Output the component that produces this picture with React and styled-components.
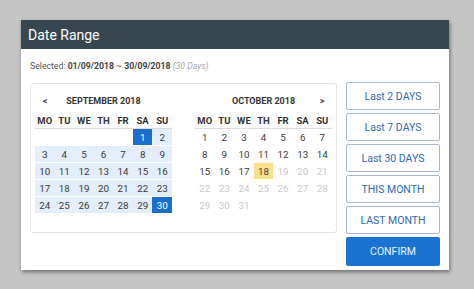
import React from "react";
import styled, { createGlobalStyle } from "styled-components";

const Global = createGlobalStyle`
  html, body { margin: 0; padding: 0; }
  body {
    background: #c5c5c5;
    font-family: Roboto, "Liberation Sans", sans-serif;
    width: 474px;
    height: 289px;
    overflow: hidden;
  }
  * { box-sizing: border-box; }
`;

const Panel = styled.div`
  margin: 20px 0 0 21px;
  width: 428px;
  height: 250px;
  background: #fff;
  box-shadow: 1px 2px 4px rgba(0, 0, 0, 0.45);
`;

const Header = styled.div`
  height: 29px;
  background: #37474f;
  color: #fff;
  font-size: 14px;
  padding-left: 7px;
  display: flex;
  align-items: center;
`;

const Body = styled.div`
  padding: 11px 9px 4px 9px;
`;

const Selected = styled.div`
  font-size: 8.7px;
  line-height: 12px;
  height: 12px;
  color: #555;
  margin-bottom: 10px;
  b { color: #444; font-weight: 700; }
  i { color: #aaa; }
`;

const Row = styled.div`
  display: flex;
  gap: 9px;
  align-items: flex-start;
`;

const CalendarBox = styled.div`
  margin-top: 1px;
  width: 307px;
  height: 150px;
  border: 1px solid #e4e4e4;
  border-radius: 3px;
  padding: 5px 4px 0 4px;
  display: flex;
  gap: 23px;
`;

const Month = styled.div`
  width: 137px;
`;

const MonthHeader = styled.div`
  height: 24px;
  display: grid;
  grid-template-columns: 20px 1fr 20px;
  align-items: center;
  text-align: center;
  font-size: 9px;
  font-weight: 700;
  color: #333;
`;

const Arrow = styled.span`
  font-size: 9px;
  font-weight: 700;
  color: #333;
`;

const Weekdays = styled.div`
  display: grid;
  grid-template-columns: repeat(7, 1fr);
  height: 16px;
  align-items: center;
  text-align: center;
  font-size: 9.5px;
  font-weight: 700;
  color: #333;
  border-bottom: 1px solid #dcdcdc;
`;

const Days = styled.div`
  display: grid;
  grid-template-columns: repeat(7, 1fr);
  grid-auto-rows: 16px;
  row-gap: 1px;
`;

const bg = {
  range: "#e3eefa",
  selected: "#1a6fcd",
  today: "#fbe08a",
  normal: "transparent",
  disabled: "transparent",
  empty: "transparent",
};
const fg = {
  range: "#3a3a3a",
  selected: "#fff",
  today: "#3a3a3a",
  normal: "#3a3a3a",
  disabled: "#c9c9c9",
  empty: "#3a3a3a",
};

const Day = styled.div`
  display: flex;
  align-items: center;
  justify-content: center;
  font-size: 9.8px;
  background: ${(p) => bg[p.$kind]};
  color: ${(p) => fg[p.$kind]};
`;

const Buttons = styled.div`
  width: 94px;
  display: flex;
  flex-direction: column;
  gap: 3px;
`;

const OptionButton = styled.button`
  height: 28px;
  border: 1px solid #a7b9cb;
  border-radius: 2px;
  background: #fff;
  color: #3069ac;
  font-family: Roboto, "Liberation Sans", sans-serif;
  font-size: 10.5px;
  padding: 0;
`;

const ConfirmButton = styled(OptionButton)`
  height: 29px;
  border: none;
  background: #1a73d0;
  color: #eaf3fd;
`;

const WEEK = ["MO", "TU", "WE", "TH", "FR", "SA", "SU"];

function buildSep() {
  const cells = [];
  for (let i = 0; i < 5; i++) cells.push({ n: "", k: "empty" });
  for (let d = 1; d <= 30; d++) {
    cells.push({ n: d, k: d === 1 || d === 30 ? "selected" : "range" });
  }
  return cells;
}

function buildOct() {
  const cells = [];
  for (let d = 1; d <= 31; d++) {
    cells.push({ n: d, k: d === 18 ? "today" : d > 18 ? "disabled" : "normal" });
  }
  return cells;
}

function Calendar({ title, prev, next, cells }) {
  return (
    <Month>
      <MonthHeader>
        <Arrow>{prev ? "<" : ""}</Arrow>
        <span>{title}</span>
        <Arrow>{next ? ">" : ""}</Arrow>
      </MonthHeader>
      <Weekdays>
        {WEEK.map((w) => (
          <span key={w}>{w}</span>
        ))}
      </Weekdays>
      <Days>
        {cells.map((c, i) => (
          <Day key={i} $kind={c.k}>
            {c.n}
          </Day>
        ))}
      </Days>
    </Month>
  );
}

export default function App() {
  return (
    <>
      <Global />
      <Panel>
        <Header>Date Range</Header>
        <Body>
          <Selected>
            Selected: <b>01/09/2018</b> ~ <b>30/09/2018</b> <i>(30 Days)</i>
          </Selected>
          <Row>
            <CalendarBox>
              <Calendar title="SEPTEMBER 2018" prev cells={buildSep()} />
              <Calendar title="OCTOBER 2018" next cells={buildOct()} />
            </CalendarBox>
            <Buttons>
              <OptionButton>Last 2 DAYS</OptionButton>
              <OptionButton>Last 7 DAYS</OptionButton>
              <OptionButton>Last 30 DAYS</OptionButton>
              <OptionButton>THIS MONTH</OptionButton>
              <OptionButton>LAST MONTH</OptionButton>
              <ConfirmButton>CONFIRM</ConfirmButton>
            </Buttons>
          </Row>
        </Body>
      </Panel>
    </>
  );
}
